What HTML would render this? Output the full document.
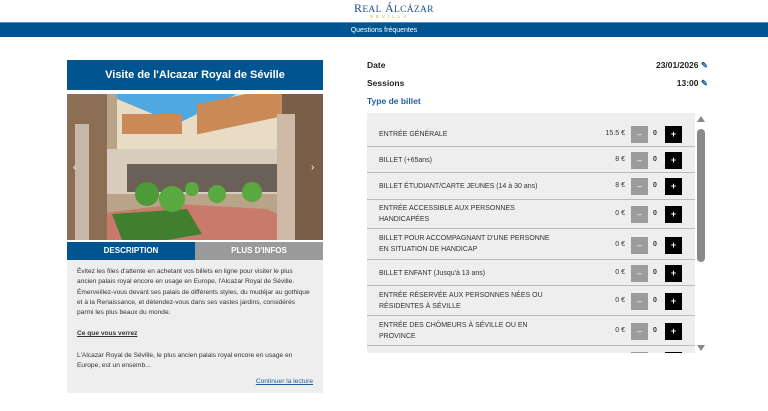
<!DOCTYPE html>
<html><head><meta charset="utf-8"><style>
*{margin:0;padding:0;box-sizing:border-box}
body{width:768px;height:411px;background:#fff;font-family:"Liberation Sans",sans-serif;position:relative;overflow:hidden;color:#222}
.a{position:absolute}
.logo{left:354px;top:1px;font-family:"Liberation Serif",serif;color:#1d4f8a;font-size:12px;letter-spacing:.3px}
.sev{left:370px;top:14px;font-size:4.5px;color:#c9a43a;letter-spacing:3px}
.bar{left:0;top:22px;width:768px;height:15px;background:#00548f;color:#fff;font-size:7px;text-align:center;line-height:15px;border-top:1px solid #5b8fbf}
.title{left:67px;top:60px;width:256px;height:30px;background:#00548f;color:#fff;font-weight:bold;font-size:11px;text-align:center;line-height:31px}
.tab1{left:67px;top:242px;width:128px;height:18px;background:#00548f;color:#fff;font-size:8px;font-weight:bold;text-align:center;line-height:18px}
.tab2{left:195px;top:242px;width:128px;height:18px;background:#9a9a9a;color:#fff;font-size:8px;font-weight:bold;text-align:center;line-height:18px}
.desc{left:67px;top:260px;width:256px;height:133px;background:#eeeeee;font-size:6.6px;line-height:10.3px;padding:7px 10px;color:#333}
.lab{left:367px;font-size:8.5px;font-weight:bold}
.val{font-size:8.5px;font-weight:bold;text-align:right}
.list{left:367px;top:113px;width:328px;height:240px;background:#eee;overflow:hidden}
.row{position:absolute;left:0;width:328px;border-bottom:1px solid #bbb;font-size:7px;color:#333}
.row .t{position:absolute;left:12px;line-height:11px}
.row .p{position:absolute;right:70px;font-size:7px}
.row .m{position:absolute;left:264px;width:17px;height:17px;background:#9c9c9c;color:#fff;text-align:center;line-height:17px;font-size:9px}
.row .z{position:absolute;left:286px;font-weight:bold;font-size:7px}
.row .pl{position:absolute;left:298px;width:17px;height:17px;background:#000;color:#fff;text-align:center;line-height:17px;font-size:9px;font-weight:bold}
</style></head><body>
<div class="a logo">R<span style="font-size:9.5px">EAL</span> Á<span style="font-size:9.5px">LCÁZAR</span></div>
<div class="a sev">SEVILLA</div>
<div class="a bar">Questions fréquentes</div>
<div class="a title">Visite de l'Alcazar Royal de Séville</div>
<svg class="a" style="left:67px;top:94px" width="256" height="146" viewBox="0 0 256 146">
<rect width="256" height="146" fill="#b9a48a"/>
<rect x="50" y="0" width="160" height="40" fill="#4fa8e0"/>
<polygon points="50,5 110,30 170,0 230,0 230,60 50,60" fill="#e9dcc5"/>
<rect x="55" y="20" width="60" height="20" fill="#c98a58"/>
<rect x="130" y="10" width="85" height="30" fill="#c98a58" transform="skewY(-12) translate(0,28)"/>
<rect x="40" y="55" width="200" height="45" fill="#d8cdbd"/>
<rect x="60" y="70" width="170" height="28" fill="#6b6058"/>
<polygon points="30,120 110,110 200,115 256,140 256,146 20,146" fill="#c97a6a"/>
<polygon points="45,120 120,115 135,140 100,146 55,146" fill="#3f7f2f"/>
<circle cx="80" cy="100" r="12" fill="#4e9a38"/><circle cx="105" cy="105" r="13" fill="#5aa840"/>
<circle cx="150" cy="100" r="9" fill="#5aa840"/><circle cx="185" cy="98" r="10" fill="#5aa840"/><circle cx="125" cy="95" r="7" fill="#5aa840"/>
<rect x="0" y="0" width="40" height="146" fill="#8c6e55"/><rect x="8" y="30" width="14" height="116" fill="#c8b8a8"/>
<rect x="215" y="0" width="41" height="146" fill="#7a5e48"/><rect x="210" y="20" width="18" height="126" fill="#cdb9a6"/>
<text x="6" y="76" fill="#fff" font-size="10">‹</text><text x="244" y="76" fill="#fff" font-size="10">›</text>
</svg>
<div class="a tab1">DESCRIPTION</div><div class="a tab2">PLUS D'INFOS</div>
<div class="a desc">Évitez les files d'attente en achetant vos billets en ligne pour visiter le plus ancien palais royal encore en usage en Europe, l'Alcazar Royal de Séville. Émerveillez-vous devant ses palais de différents styles, du mudéjar au gothique et à la Renaissance, et détendez-vous dans ses vastes jardins, considérés parmi les plus beaux du monde.<div style="margin-top:11px;font-weight:bold;text-decoration:underline">Ce que vous verrez</div><div style="margin-top:11px">L'Alcazar Royal de Séville, le plus ancien palais royal encore en usage en Europe, est un ensemb...</div><div style="text-align:right;color:#1a5d9a;text-decoration:underline;margin-top:6px">Continuer la lecture</div></div>
<div class="a lab" style="top:60px">Date</div>
<div class="a val" style="top:60px;right:60px">23/01/2026 <span style="color:#1d5fa0">✎</span></div>
<div class="a lab" style="top:78px">Sessions</div>
<div class="a val" style="top:78px;right:60px">13:00 <span style="color:#1d5fa0">✎</span></div>
<div class="a lab" style="top:96px;color:#1d5fa0">Type de billet</div>
<div class="a list">
<div class="row" style="top:9px;height:25px"><span class="t" style="top:7px">ENTRÉE GÉNÉRALE</span><span class="p" style="top:8px">15.5 €</span><span class="m" style="top:4px">–</span><span class="z" style="top:8px">0</span><span class="pl" style="top:4px">+</span></div>
<div class="row" style="top:34px;height:26px"><span class="t" style="top:8px">BILLET (+65ans)</span><span class="p" style="top:9px">8 €</span><span class="m" style="top:5px">–</span><span class="z" style="top:9px">0</span><span class="pl" style="top:5px">+</span></div>
<div class="row" style="top:60px;height:27px"><span class="t" style="top:8px">BILLET ÉTUDIANT/CARTE JEUNES (14 à 30 ans)</span><span class="p" style="top:9px">8 €</span><span class="m" style="top:5px">–</span><span class="z" style="top:9px">0</span><span class="pl" style="top:5px">+</span></div>
<div class="row" style="top:87px;height:29px"><span class="t" style="top:3px">ENTRÉE ACCESSIBLE AUX PERSONNES<br>HANDICAPÉES</span><span class="p" style="top:10px">0 €</span><span class="m" style="top:6px">–</span><span class="z" style="top:10px">0</span><span class="pl" style="top:6px">+</span></div>
<div class="row" style="top:116px;height:31px"><span class="t" style="top:4px">BILLET POUR ACCOMPAGNANT D'UNE PERSONNE<br>EN SITUATION DE HANDICAP</span><span class="p" style="top:12px">0 €</span><span class="m" style="top:8px">–</span><span class="z" style="top:12px">0</span><span class="pl" style="top:8px">+</span></div>
<div class="row" style="top:147px;height:26px"><span class="t" style="top:8px">BILLET ENFANT (Jusqu'à 13 ans)</span><span class="p" style="top:9px">0 €</span><span class="m" style="top:5px">–</span><span class="z" style="top:9px">0</span><span class="pl" style="top:5px">+</span></div>
<div class="row" style="top:173px;height:30px"><span class="t" style="top:4px">ENTRÉE RÉSERVÉE AUX PERSONNES NÉES OU<br>RÉSIDENTES À SÉVILLE</span><span class="p" style="top:11px">0 €</span><span class="m" style="top:7px">–</span><span class="z" style="top:11px">0</span><span class="pl" style="top:7px">+</span></div>
<div class="row" style="top:203px;height:30px"><span class="t" style="top:4px">ENTRÉE DES CHÔMEURS À SÉVILLE OU EN<br>PROVINCE</span><span class="p" style="top:11px">0 €</span><span class="m" style="top:7px">–</span><span class="z" style="top:11px">0</span><span class="pl" style="top:7px">+</span></div>
<div class="row" style="top:233px;height:30px;border:0"><span class="m" style="top:6px">–</span><span class="pl" style="top:6px">+</span></div>
</div>
<div class="a" style="left:697px;top:116px;width:0;height:0;border-left:4px solid transparent;border-right:4px solid transparent;border-bottom:6px solid #888"></div>
<div class="a" style="left:697px;top:129px;width:8px;height:133px;background:#8a8a8a;border-radius:4px"></div>
<div class="a" style="left:697px;top:345px;width:0;height:0;border-left:4px solid transparent;border-right:4px solid transparent;border-top:6px solid #888"></div>
</body></html>
